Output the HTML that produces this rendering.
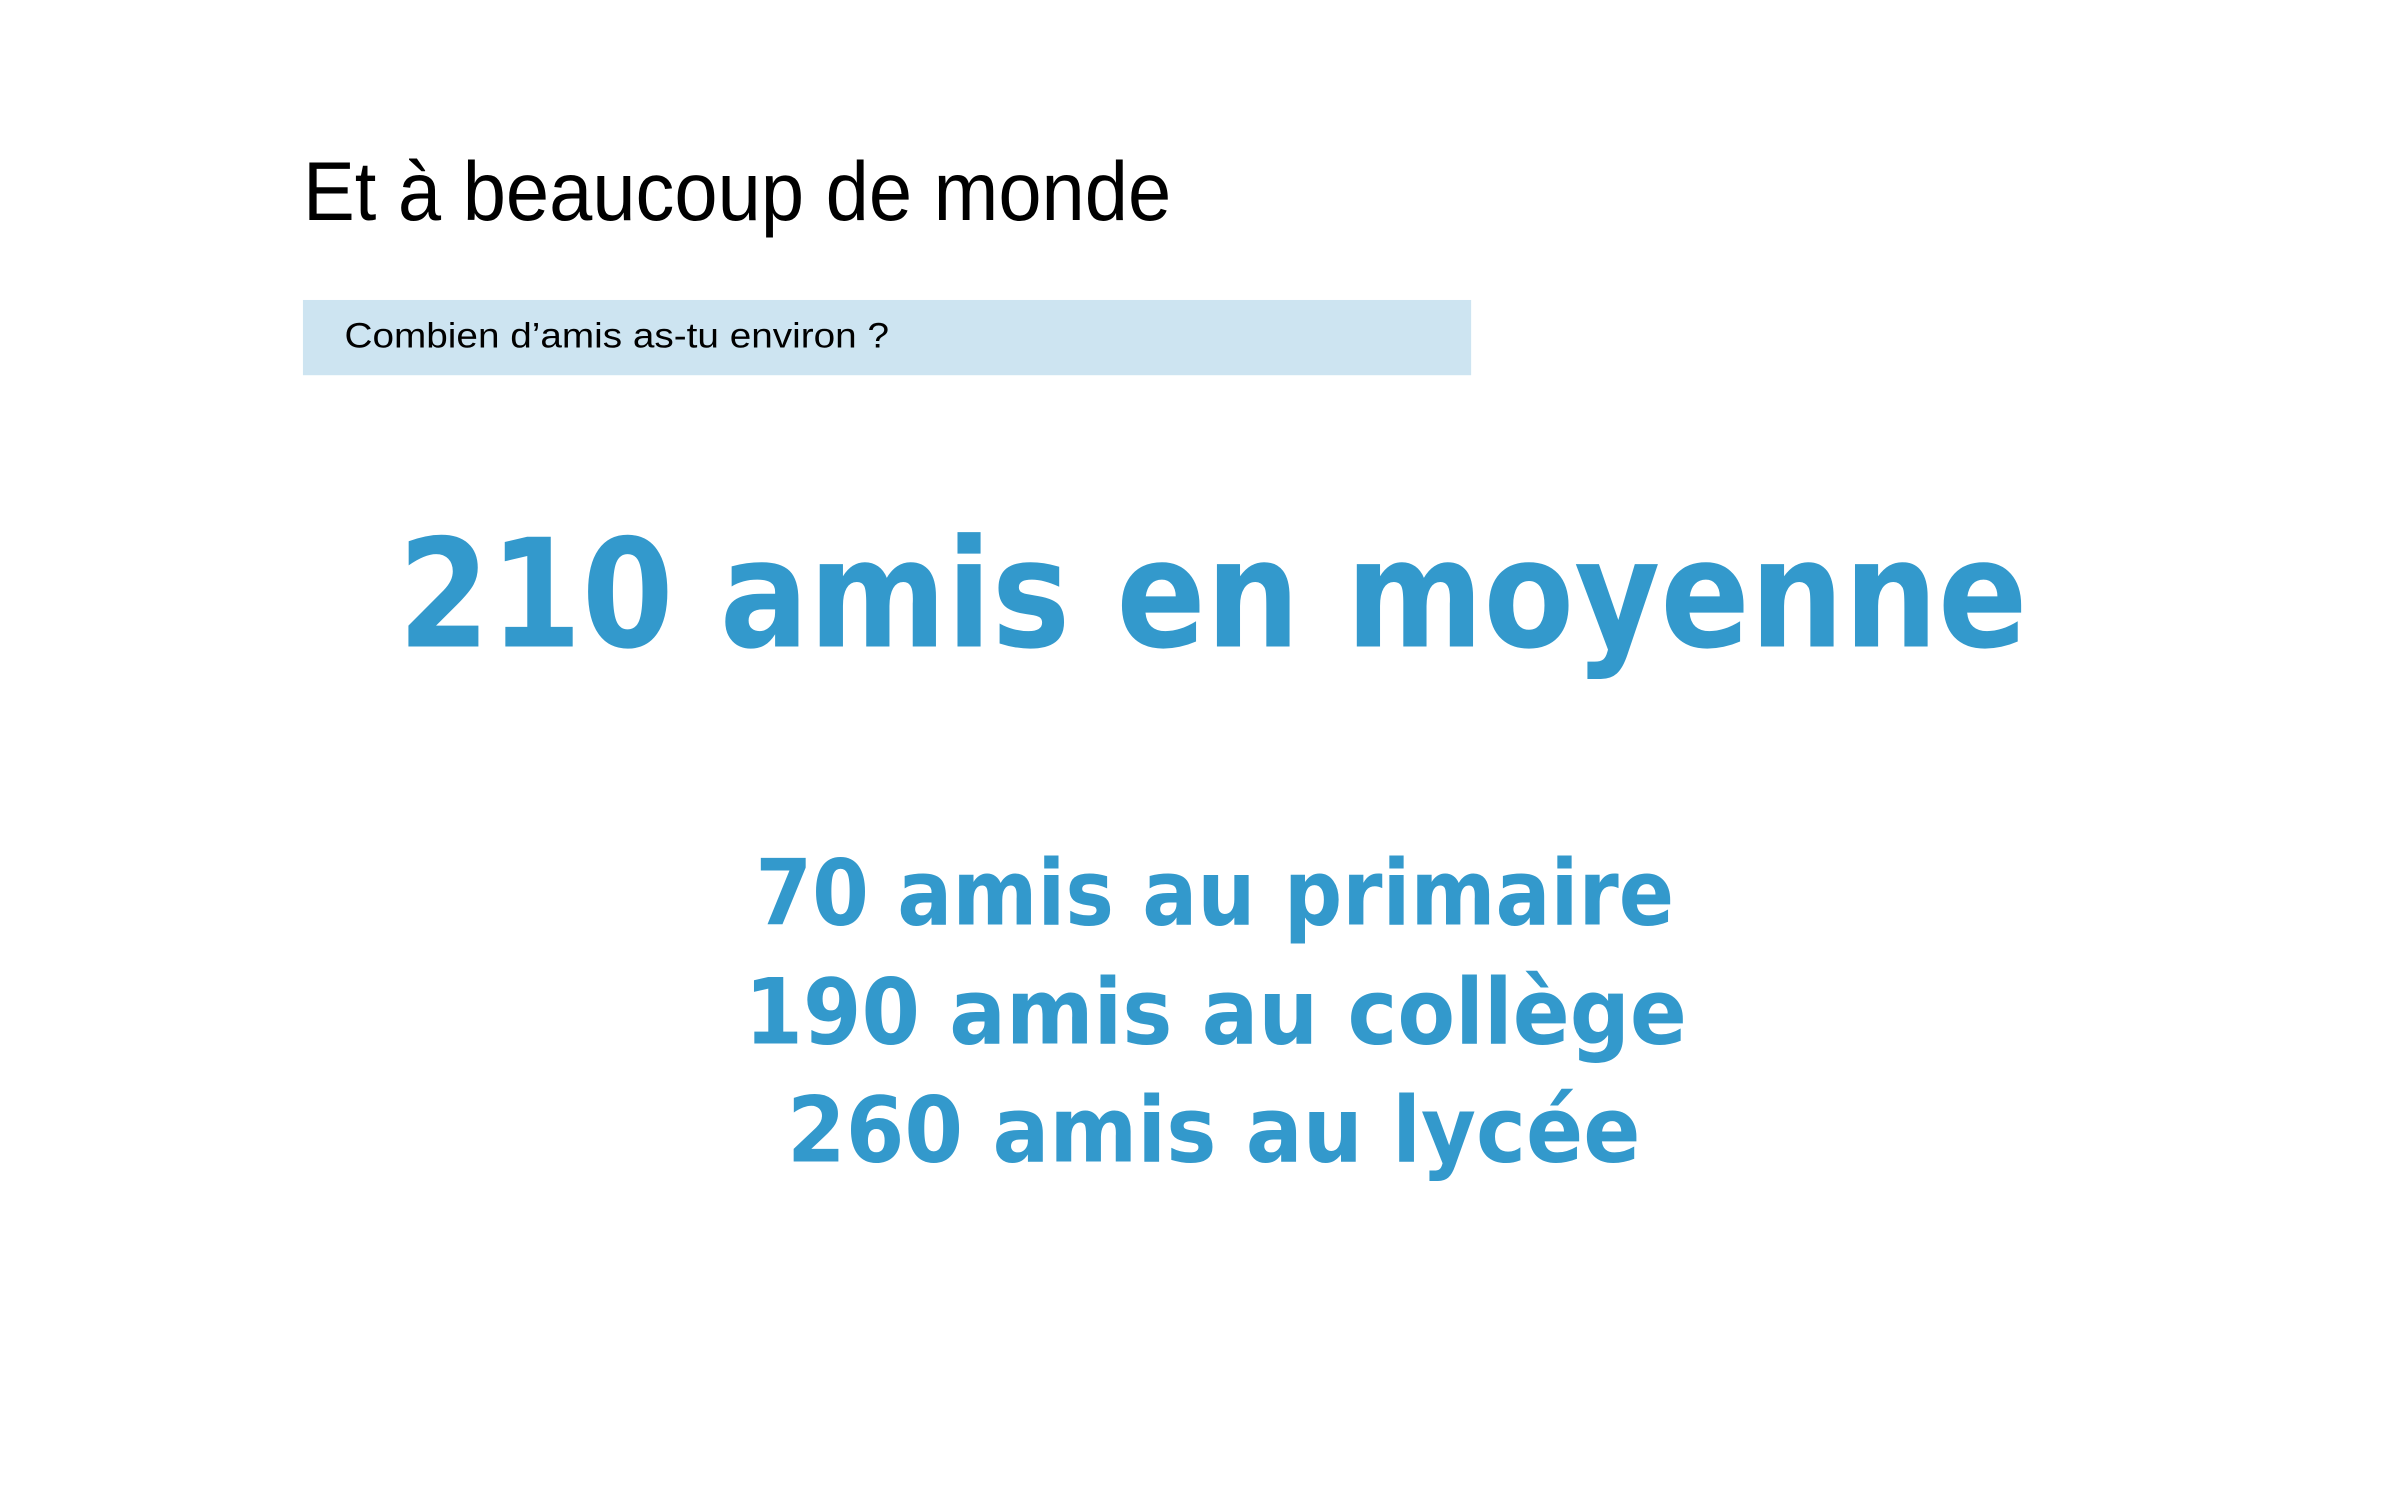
<!DOCTYPE html>
<html><head><meta charset="utf-8"><style>
html,body{margin:0;padding:0;background:#fff;}
body{width:2397px;height:1498px;overflow:hidden;position:relative;}
</style></head><body>
<svg width="2397" height="1498" viewBox="0 0 2397 1498" xmlns="http://www.w3.org/2000/svg" style="position:absolute;left:0;top:0">
<g transform="scale(0.99)">
<rect x="306" y="303" width="1180" height="76" fill="#cde4f1"/>
<text x="306" y="222" font-family="Liberation Sans, Arial, sans-serif" font-size="84" fill="#000" textLength="877" lengthAdjust="spacingAndGlyphs">Et à beaucoup de monde</text>
<text x="348" y="351" font-family="Liberation Sans, Arial, sans-serif" font-size="36" fill="#000" textLength="550" lengthAdjust="spacingAndGlyphs">Combien d’amis as-tu environ ?</text>
<g font-family="DejaVu Sans, sans-serif" font-weight="bold" fill="#3399cc">
<text x="402" y="653" font-size="152" textLength="1646" lengthAdjust="spacingAndGlyphs">210 amis en moyenne</text>
<text x="763" y="934" font-size="92" textLength="928" lengthAdjust="spacingAndGlyphs">70 amis au primaire</text>
<text x="752" y="1054" font-size="92" textLength="952" lengthAdjust="spacingAndGlyphs">190 amis au collège</text>
<text x="795" y="1173" font-size="92" textLength="862" lengthAdjust="spacingAndGlyphs">260 amis au lycée</text>
</g>
</g>
</svg>
</body></html>
